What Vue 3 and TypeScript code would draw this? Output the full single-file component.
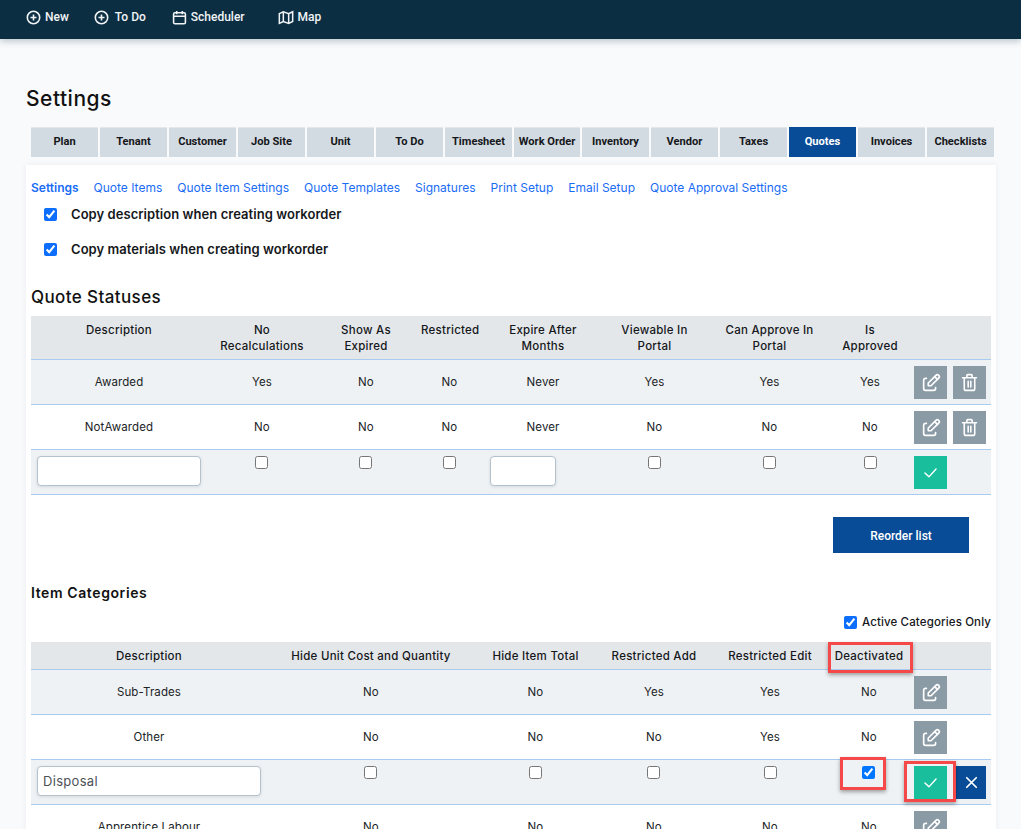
<script setup lang="ts">
interface Col { label: string[]; width: number }
type Cell = string | boolean

const navItems = [
  { label: 'New', icon: 'plus', cls: 'nav-new' },
  { label: 'To Do', icon: 'plus', cls: 'nav-todo' },
  { label: 'Scheduler', icon: 'cal', cls: 'nav-sched' },
  { label: 'Map', icon: 'map', cls: 'nav-map' },
]
const tabs = ['Plan', 'Tenant', 'Customer', 'Job Site', 'Unit', 'To Do', 'Timesheet', 'Work Order', 'Inventory', 'Vendor', 'Taxes', 'Quotes', 'Invoices', 'Checklists']
const subnav = ['Settings', 'Quote Items', 'Quote Item Settings', 'Quote Templates', 'Signatures', 'Print Setup', 'Email Setup', 'Quote Approval Settings']

const statusCols: Col[] = [
  { label: ['Description'], width: 176 },
  { label: ['No', 'Recalculations'], width: 110 },
  { label: ['Show As', 'Expired'], width: 98 },
  { label: ['Restricted'], width: 69 },
  { label: ['Expire After', 'Months'], width: 118 },
  { label: ['Viewable In', 'Portal'], width: 105 },
  { label: ['Can Approve In', 'Portal'], width: 125 },
  { label: ['Is', 'Approved'], width: 76 },
  { label: [], width: 83 },
]
const statusRows: Cell[][] = [
  ['Awarded', 'Yes', 'No', 'No', 'Never', 'Yes', 'Yes', 'Yes'],
  ['NotAwarded', 'No', 'No', 'No', 'Never', 'No', 'No', 'No'],
]
const catCols: Col[] = [
  { label: ['Description'], width: 236 },
  { label: ['Hide Unit Cost and Quantity'], width: 208 },
  { label: ['Hide Item Total'], width: 121 },
  { label: ['Restricted Add'], width: 116 },
  { label: ['Restricted Edit'], width: 116 },
  { label: ['Deactivated'], width: 82 },
  { label: [], width: 81 },
]
const catTop: Cell[][] = [
  ['Sub-Trades', 'No', 'No', 'Yes', 'Yes', 'No'],
  ['Other', 'No', 'No', 'No', 'Yes', 'No'],
]
</script>

<template>
  <div class="page">
    <header class="topbar">
      <a v-for="n in navItems" :key="n.cls" class="nav-item" :class="n.cls">
        <svg v-if="n.icon === 'plus'" class="nav-icon" viewBox="0 0 16 16"><circle cx="8" cy="8" r="6.6" /><path d="M8 4.8v6.4M4.8 8h6.4" /></svg>
        <svg v-else-if="n.icon === 'cal'" class="nav-icon" viewBox="0 0 16 16"><rect x="1.7" y="3" width="12.6" height="11.6" rx="1.4" /><path d="M1.7 6.6h12.6M5 1v3.4M11 1v3.4" /></svg>
        <svg v-else class="nav-icon map-icon" viewBox="0 0 18 16"><path d="M1.500 3.600 6 1.500l6 2.100 4.500-2.100v11l-4.500 2.100-6-2.100-4.500 2.100z" /><path d="M6 1.500v11M12 3.600v11" /></svg>
        <span>{{ n.label }}</span>
      </a>
    </header>

    <main class="main">
      <h1 class="title">Settings</h1>
      <nav class="tabs">
        <div v-for="t in tabs" :key="t" class="tab" :class="{ active: t === 'Quotes' }">{{ t }}</div>
      </nav>

      <section class="card">
        <div class="subnav">
          <a v-for="(s, i) in subnav" :key="s" :class="{ current: i === 0 }">{{ s }}</a>
        </div>
        <label class="copy-row first"><input type="checkbox" checked /><span>Copy description when creating workorder</span></label>
        <label class="copy-row"><input type="checkbox" checked /><span>Copy materials when creating workorder</span></label>

        <h2 class="h-status">Quote Statuses</h2>
        <table class="grid status">
          <colgroup><col v-for="(c, i) in statusCols" :key="i" :style="{ width: c.width + 'px' }" /></colgroup>
          <thead>
            <tr><th v-for="(c, i) in statusCols" :key="i"><template v-for="(l, j) in c.label" :key="j">{{ l }}<br v-if="j < c.label.length - 1" /></template></th></tr>
          </thead>
          <tbody>
            <tr v-for="(r, i) in statusRows" :key="i">
              <td v-for="(v, j) in r" :key="j">{{ v }}</td>
              <td class="actions">
                <button class="btn gray"><svg class="i-edit" viewBox="0 0 24 24"><path d="M7 7H6a2 2 0 0 0-2 2v9a2 2 0 0 0 2 2h9a2 2 0 0 0 2-2v-1" /><path d="M20.400 6.600a2.100 2.100 0 0 0-3-3L9 12v3h3z" /><path d="m16 5 3 3" /></svg></button>
                <button class="btn gray"><svg class="i-trash" viewBox="0 0 24 24"><path d="M4 6.500h16M9 6.500V4a1 1 0 0 1 1-1h4a1 1 0 0 1 1 1v2.500M6 6.500V19a2 2 0 0 0 2 2h8a2 2 0 0 0 2-2V6.500M10.500 10.500v6.500M13.500 10.500v6.500" /></svg></button>
              </td>
            </tr>
            <tr>
              <td class="edit"><input class="text" type="text" /></td>
              <td class="edit nudge"><input type="checkbox" /></td>
              <td class="edit nudge"><input type="checkbox" /></td>
              <td class="edit"><input type="checkbox" /></td>
              <td class="edit left"><input class="text short" type="text" /></td>
              <td class="edit"><input type="checkbox" /></td>
              <td class="edit"><input type="checkbox" /></td>
              <td class="edit"><input type="checkbox" /></td>
              <td class="actions">
                <button class="btn green"><svg viewBox="0 0 24 24"><path d="m5 12.500 5 5 9-10" /></svg></button>
              </td>
            </tr>
          </tbody>
        </table>

        <div class="reorder-row"><button class="reorder">Reorder list</button></div>

        <h3 class="h-cat">Item Categories</h3>
        <label class="active-only"><input type="checkbox" checked /><span>Active Categories Only</span></label>
        <table class="grid cats">
          <colgroup><col v-for="(c, i) in catCols" :key="i" :style="{ width: c.width + 'px' }" /></colgroup>
          <thead>
            <tr><th v-for="(c, i) in catCols" :key="i">{{ c.label[0] }}</th></tr>
          </thead>
          <tbody>
            <tr v-for="(r, i) in catTop" :key="i">
              <td v-for="(v, j) in r" :key="j">{{ v }}</td>
              <td class="actions">
                <button class="btn gray"><svg class="i-edit" viewBox="0 0 24 24"><path d="M7 7H6a2 2 0 0 0-2 2v9a2 2 0 0 0 2 2h9a2 2 0 0 0 2-2v-1" /><path d="M20.400 6.600a2.100 2.100 0 0 0-3-3L9 12v3h3z" /><path d="m16 5 3 3" /></svg></button>
              </td>
            </tr>
            <tr>
              <td class="edit"><input class="text" type="text" value="Disposal" /></td>
              <td class="edit nudge"><input type="checkbox" /></td>
              <td class="edit"><input type="checkbox" /></td>
              <td class="edit nudge"><input type="checkbox" /></td>
              <td class="edit"><input type="checkbox" /></td>
              <td class="edit nudge"><input type="checkbox" checked /></td>
              <td class="actions">
                <button class="btn green"><svg viewBox="0 0 24 24"><path d="m5 12.500 5 5 9-10" /></svg></button>
                <button class="btn blue"><svg viewBox="0 0 24 24"><path d="M6 6l12 12M18 6 6 18" /></svg></button>
              </td>
            </tr>
            <tr>
              <td>Apprentice Labour</td><td>No</td><td>No</td><td>No</td><td>No</td><td>No</td>
              <td class="actions">
                <button class="btn gray"><svg class="i-edit" viewBox="0 0 24 24"><path d="M7 7H6a2 2 0 0 0-2 2v9a2 2 0 0 0 2 2h9a2 2 0 0 0 2-2v-1" /><path d="M20.400 6.600a2.100 2.100 0 0 0-3-3L9 12v3h3z" /><path d="m16 5 3 3" /></svg></button>
              </td>
            </tr>
          </tbody>
        </table>
      </section>
    </main>

    <div class="mark mark-head"></div>
    <div class="mark mark-check"></div>
    <div class="mark mark-save"></div>
  </div>
</template>

<style>
html, body { margin: 0; height: 829px; overflow: hidden; background: #f9fafc; }
</style>

<style scoped>
.page {
  position: relative;
  width: 1021px;
  height: 829px;
  overflow: hidden;
  background: #f9fafc;
  font-family: Inter, "Open Sans", sans-serif;
  color: #1b1e21;
}
.topbar {
  display: flex;
  align-items: flex-start;
  height: 39px;
  background: #0c2e42;
  box-shadow: 0 2px 7px rgba(12, 46, 66, .28);
  font-family: Roboto, sans-serif;
  font-size: 12px;
  font-weight: 500;
  color: #f1f4f6;
}
.nav-item { display: flex; align-items: center; height: 34px; }
.nav-new { margin-left: 26px; gap: 4px; }
.nav-todo { margin-left: 25px; gap: 6px; }
.nav-sched { margin-left: 26px; gap: 4px; }
.nav-map { margin-left: 33px; gap: 4px; }
.nav-icon { width: 15px; height: 15px; fill: none; stroke: #f1f4f6; stroke-width: 1.700; }
.map-icon { width: 16px; }
.main { padding: 47px 25px 0 26px; }
.title { margin: 0; padding-top: 1px; font-size: 21px; line-height: 24px; font-weight: 500; color: #111; letter-spacing: .5px; }
.tabs { display: flex; gap: 2px; margin: 16px 0 0 5px; }
.tab {
  box-sizing: border-box;
  flex: 0 0 67px;
  height: 30px;
  padding-top: 6px;
  text-align: center;
  white-space: nowrap;
  background: #d3dbe2;
  border-top: 1px solid #e3e8ec;
  font: 700 11.100px/16px Roboto, sans-serif;
  color: #15171a;
}
.tab:nth-child(8) { flex-basis: 66px; }
.tab.active { background: #084b96; color: #fff; border-top-color: #084b96; }
.card {
  margin-top: 8px;
  padding: 15px 5px 0;
  background: #fff;
  box-shadow: 0 0 6px rgba(40, 60, 90, .07);
  min-height: 700px;
}
.subnav { display: flex; gap: 15px; font-size: 12px; line-height: 16px; color: #1a6cf5; white-space: nowrap; }
.subnav .current { font-weight: 600; }
.copy-row { display: flex; align-items: center; gap: 14px; height: 20px; margin: 15px 0 0 13px; font-size: 13px; font-weight: 600; letter-spacing: .05px; color: #15171a; }
.copy-row.first { margin-top: 8px; }
.copy-row input, .active-only input { margin: 0; width: 13px; height: 13px; accent-color: #0d6efd; }
.h-status { margin: 28px 0 0; font-size: 17px; line-height: 20px; font-weight: 500; letter-spacing: .4px; color: #111; }
.grid { margin: 9px 0 0; width: 960px; table-layout: fixed; border-collapse: separate; border-spacing: 0; font-size: 11.500px; line-height: 16px; }
.grid th, .grid td { white-space: nowrap; text-align: center; border-bottom: 1px solid #a9cbf0; }
.grid th { padding: 6px 6px 5px; background: #e4e7ea; font-weight: 500; letter-spacing: .25px; color: #15171a; vertical-align: top; }
.grid td { padding: 5px 6px 6px; vertical-align: middle; letter-spacing: .1px; color: #202326; }
.grid tbody tr:nth-child(odd) td { background: #eff2f4; }
.grid td.edit { padding: 6px 6px 5px; vertical-align: top; line-height: 0; }
.grid td.left { text-align: left; }
.grid td.edit input[type='checkbox'] { margin: 0; width: 13px; height: 13px; }
.grid td.nudge input[type='checkbox'] { margin-right: 1px; }
.text {
  box-sizing: border-box;
  width: 100%;
  height: 30px;
  padding: 0 5px;
  border: 1px solid #b3c2cd;
  border-radius: 4px;
  background: #fff;
  box-shadow: 0 1px 3px rgba(60, 80, 100, .15);
  font: 13px Inter, sans-serif;
  letter-spacing: .3px;
  color: #4c5257;
  outline: none;
}
.text.short { width: 66px; }
.grid td.actions { text-align: left; padding: 6px 0 5px 6px; font-size: 0; line-height: 0; }
.cats td.actions { padding-left: 4px; }
.btn { display: inline-flex; align-items: center; justify-content: center; box-sizing: border-box; width: 33px; height: 33px; padding: 0; border: 0; vertical-align: top; }
.btn + .btn { margin-left: 6px; }
.btn svg { width: 19px; height: 19px; fill: none; stroke: #fff; stroke-width: 1.800; stroke-linecap: round; stroke-linejoin: round; }
.btn svg.i-edit { width: 22px; height: 22px; stroke-width: 1.800; }
.btn svg.i-trash { width: 21px; height: 21px; stroke-width: 1.800; }
.gray { background: #8b9ba5; }
.green { background: #19bf9c; }
.blue { background: #084b96; width: 30px; margin-left: 9px !important; }
.blue svg { stroke-width: 2.200; }
.reorder-row { display: flex; justify-content: flex-end; margin: 22px 22px 0 0; }
.reorder { width: 136px; height: 36px; border: 0; padding: 2px 0 0; background: #084b96; color: #fff; font: 500 12px Roboto, sans-serif; }
.h-cat { margin: 31px 0 0; font-size: 14px; line-height: 18px; font-weight: 600; letter-spacing: .6px; color: #111; }
.active-only { display: flex; align-items: center; justify-content: flex-end; gap: 5px; height: 16px; margin-top: 12px; font-size: 11.500px; font-weight: 500; letter-spacing: .13px; color: #15171a; white-space: nowrap; }
.cats { margin-top: 12px; }
.mark { position: absolute; box-sizing: border-box; border: 3px solid #f54848; box-shadow: 0 2px 4px rgba(0, 0, 0, .35); }
.mark-head { left: 828px; top: 642px; width: 85px; height: 31px; }
.mark-check { left: 840px; top: 757px; width: 46px; height: 33px; }
.mark-save { left: 904px; top: 761px; width: 52px; height: 41px; }
</style>
